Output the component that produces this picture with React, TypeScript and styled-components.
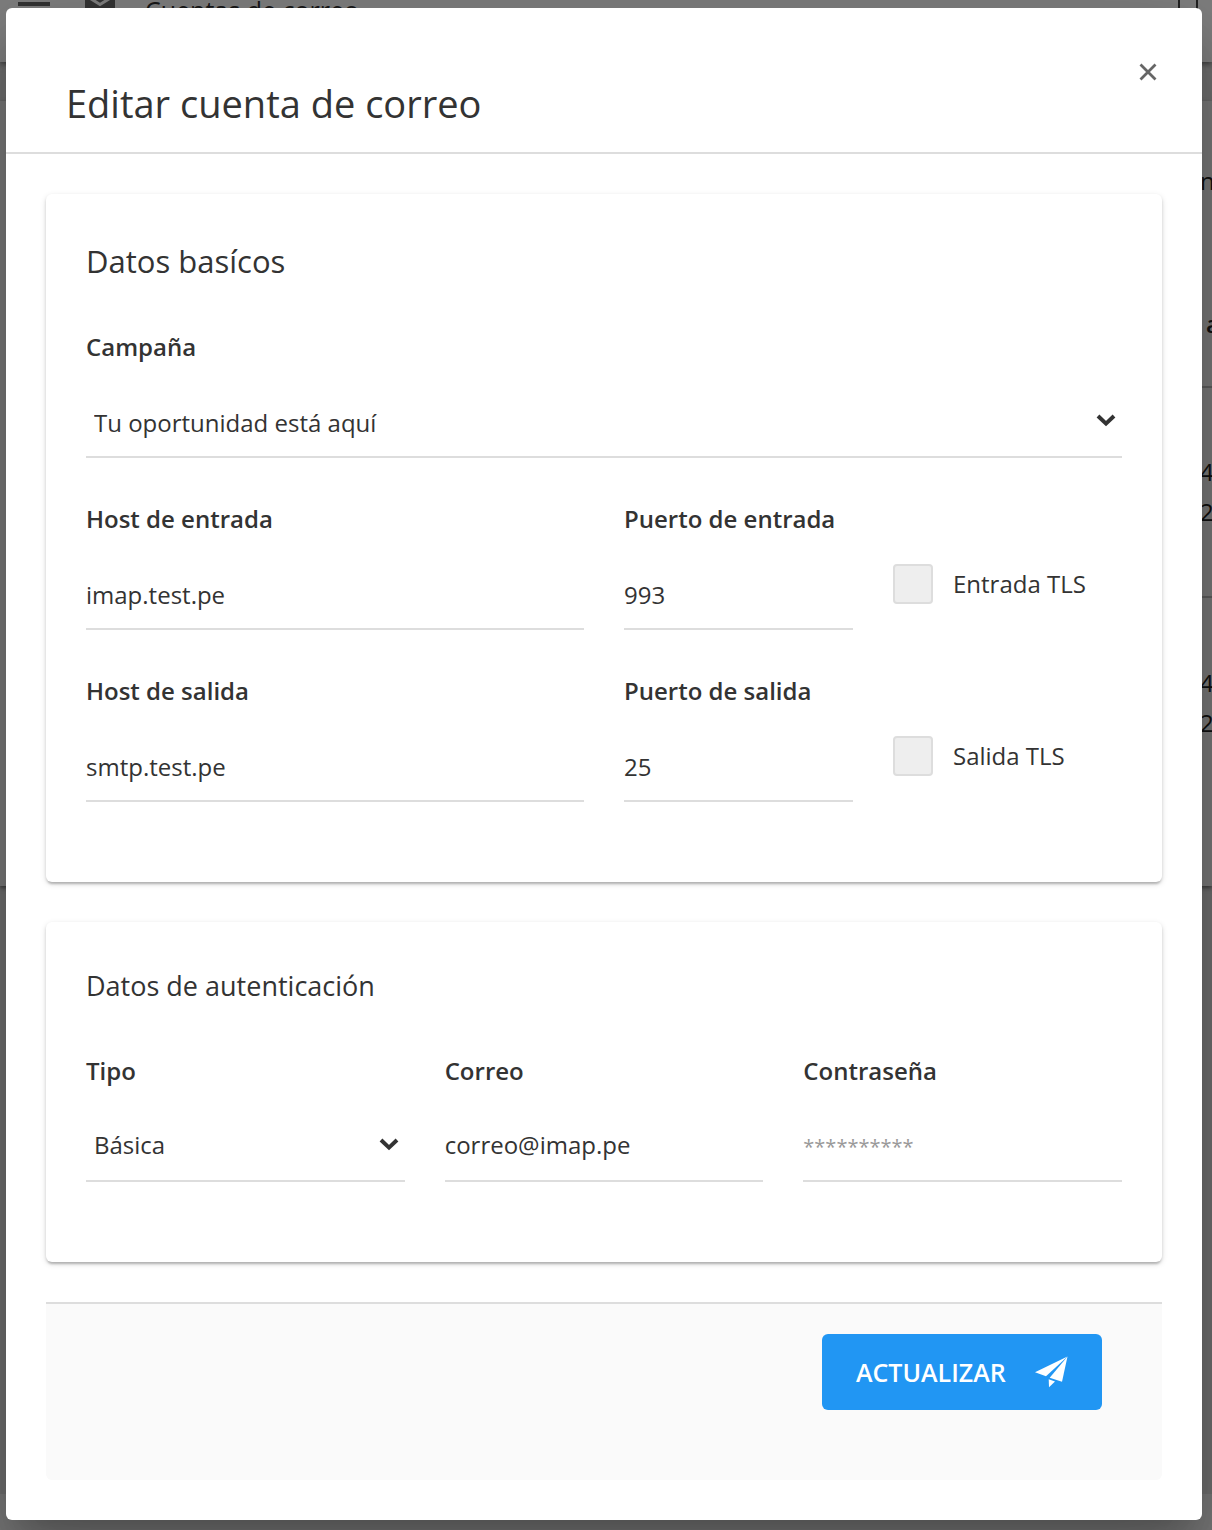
import React, { useState } from "react";
import styled, { createGlobalStyle } from "styled-components";

const ink = "#333333";
const line = "#dddddd";

const GlobalStyle = createGlobalStyle`
  *, *::before, *::after { box-sizing: border-box; }
  body {
    margin: 0;
    color: ${ink};
    font-family: "Segoe UI", "Open Sans", "Noto Sans", sans-serif;
    font-size: 24px;
    line-height: 36px;
  }
  h1, h2, p { margin: 0; font-weight: 400; }
`;

const Stage = styled.div`
  position: relative;
  min-height: 100vh;
`;

/* The page that stays behind the open dialog */
const Backdrop = styled.div`
  position: absolute;
  inset: 0;
  overflow: hidden;
  display: flex;
  flex-direction: column;
  background: #dedede;
`;

const TopBar = styled.header`
  flex: none;
  display: flex;
  align-items: flex-start;
  height: 62px;
  padding: 0 14px 0 18px;
  background: #ffffff;
  box-shadow: 0 2px 6px rgba(0, 0, 0, 0.5);
`;

const TopTitle = styled.p`
  margin-left: 30px;
  font-size: 25px;
  line-height: 20px;
`;

const MenuIcon = styled.svg`
  width: 32px;
  height: 26px;
  margin-top: 2px;
`;

const MailIcon = styled.svg`
  width: 30px;
  height: 24px;
  margin: -4px 0 0 35px;
`;

const Bracket = styled.span`
  width: 20px;
  height: 24px;
  margin-left: auto;
  border: solid #444444;
  border-width: 0 2px 2px;
`;

const ListPanel = styled.main`
  flex: none;
  display: flex;
  justify-content: flex-end;
  height: 785px;
  margin-top: 39px;
  background: #f3f3f3;
  box-shadow: 0 2px 4px rgba(0, 0, 0, 0.5);
`;

const ListEdge = styled.div`
  width: 12px;
  color: #222222;
  white-space: nowrap;
`;

const EdgeCell = styled.div<{ $height: number; $bold?: boolean; $ruled?: boolean }>`
  display: flex;
  flex-direction: column;
  justify-content: center;
  height: ${(p) => p.$height}px;
  padding-left: ${(p) => (p.$bold ? 6 : 0)}px;
  border-bottom: ${(p) => (p.$ruled ? 2 : 0)}px solid #bbbbbb;
  font-weight: ${(p) => (p.$bold ? 600 : 400)};
  line-height: 40px;
`;

const PageFooter = styled.div`
  flex: none;
  height: 36px;
  margin-top: auto;
  background: #f3f3f3;
`;

const Overlay = styled.div`
  position: relative;
  min-height: 100vh;
  padding: 8px 10px 10px 6px;
  background: rgba(0, 0, 0, 0.5);
`;

const Dialog = styled.section`
  border-radius: 6px;
  background: #ffffff;
  box-shadow:
    0 22px 30px -14px rgba(0, 0, 0, 0.2),
    0 48px 76px 6px rgba(0, 0, 0, 0.14),
    0 18px 92px 16px rgba(0, 0, 0, 0.12);
`;

const DialogHeader = styled.header`
  display: flex;
  align-items: flex-start;
  justify-content: space-between;
  padding: 44px 34px 14px 60px;
  border-bottom: 2px solid ${line};
`;

const Title = styled.h1`
  margin-top: 16px;
  font-size: 38px;
  line-height: 70px;
`;

const CloseButton = styled.button`
  display: grid;
  place-items: center;
  width: 40px;
  height: 40px;
  padding: 0;
  border: 0;
  background: none;
  color: #666666;
  cursor: pointer;
`;

const DialogBody = styled.form`
  display: flex;
  flex-direction: column;
  gap: 40px;
  padding: 40px;
`;

const Card = styled.section`
  padding: 40px 40px 80px;
  border-radius: 6px;
  box-shadow:
    0 4px 2px -2px rgba(0, 0, 0, 0.12),
    0 2px 3px rgba(0, 0, 0, 0.14),
    0 2px 6px rgba(0, 0, 0, 0.12);
`;

const CardTitle = styled.h2<{ $large?: boolean }>`
  margin-bottom: ${(p) => (p.$large ? 38 : 40)}px;
  font-size: ${(p) => (p.$large ? 31 : 27)}px;
  line-height: ${(p) => (p.$large ? 54 : 48)}px;
`;

const Grid = styled.div`
  display: grid;
  grid-template-columns: repeat(12, minmax(0, 1fr));
  gap: 40px;
`;

const Field = styled.div<{ $span: number }>`
  grid-column: span ${(p) => p.$span};
  display: flex;
  flex-direction: column;
  gap: 22px;
`;

const Label = styled.label`
  font-weight: 600;
  line-height: 42px;
`;

const TextInput = styled.input<{ $raised?: boolean }>`
  width: 100%;
  height: 68px;
  padding: 0 0 ${(p) => (p.$raised ? 6 : 2)}px;
  border: 0;
  border-bottom: 2px solid ${line};
  border-radius: 0;
  outline: 0;
  background: none;
  color: ${ink};
  font: inherit;
  &::placeholder { color: #999999; font-size: 20px; opacity: 1; }
`;

const SelectBox = styled.div`
  display: grid;
  align-items: center;
  & > * { grid-area: 1 / 1; }
`;

const NativeSelect = styled.select<{ $raised?: boolean }>`
  appearance: none;
  width: 100%;
  height: 68px;
  padding: 0 40px ${(p) => (p.$raised ? 4 : 0)}px 8px;
  border: 0;
  border-bottom: 2px solid ${line};
  border-radius: 0;
  outline: 0;
  background: none;
  color: ${ink};
  font: inherit;
`;

const Chevron = styled.svg`
  justify-self: end;
  width: 20px;
  height: 14px;
  margin: 0 6px 8px 0;
  pointer-events: none;
`;

const CheckLabel = styled.label`
  grid-column: span 3;
  align-self: end;
  display: flex;
  align-items: center;
  gap: 20px;
  margin-bottom: 26px;
  line-height: 40px;
  white-space: nowrap;
`;

const CheckBox = styled.input`
  appearance: none;
  flex: none;
  width: 40px;
  height: 40px;
  margin: 0;
  border: 2px solid ${line};
  border-radius: 4px;
  background: #eeeeee;
  &:checked { background: #2196f3; }
`;

const Actions = styled.footer`
  display: flex;
  justify-content: flex-end;
  padding: 30px 60px 70px;
  border-top: 2px solid ${line};
  border-radius: 0 0 6px 6px;
  background: #fafafa;
`;

const SubmitButton = styled.button`
  display: flex;
  align-items: center;
  justify-content: space-between;
  width: 280px;
  height: 76px;
  padding: 0 34px;
  border: 0;
  border-radius: 6px;
  background: #2196f3;
  color: #ffffff;
  font: inherit;
  font-size: 25px;
  font-weight: 600;
  cursor: pointer;
`;

function SelectField(props: {
  id: string;
  label: string;
  span: number;
  options: string[];
  raised?: boolean;
}) {
  return (
    <Field $span={props.span}>
      <Label htmlFor={props.id}>{props.label}</Label>
      <SelectBox>
        <NativeSelect id={props.id} $raised={props.raised}>
          {props.options.map((o) => (
            <option key={o}>{o}</option>
          ))}
        </NativeSelect>
        <Chevron viewBox="0 0 20 14" aria-hidden="true">
          <path d="M2 3 L10 10.6 L18 3" fill="none" stroke={ink} strokeWidth="4" />
        </Chevron>
      </SelectBox>
    </Field>
  );
}

function InputField(props: {
  id: string;
  label: string;
  span: number;
  value?: string;
  type?: string;
  placeholder?: string;
  raised?: boolean;
}) {
  const [value, setValue] = useState(props.value ?? "");
  return (
    <Field $span={props.span}>
      <Label htmlFor={props.id}>{props.label}</Label>
      <TextInput
        id={props.id}
        $raised={props.raised}
        type={props.type ?? "text"}
        placeholder={props.placeholder}
        value={value}
        onChange={(e) => setValue(e.target.value)}
      />
    </Field>
  );
}

function TlsField({ label }: { label: string }) {
  return (
    <CheckLabel>
      <CheckBox type="checkbox" />
      {label}
    </CheckLabel>
  );
}

export default function App() {
  return (
    <Stage>
      <GlobalStyle />
      <Backdrop aria-hidden="true">
        <TopBar>
          <MenuIcon viewBox="0 0 32 26">
            <path d="M0 2h32M0 13h32M0 24h32" stroke="#666666" strokeWidth="4" />
          </MenuIcon>
          <MailIcon viewBox="0 0 30 24">
            <path d="M0 0h30v24H0z" fill="#666666" />
            <path d="M3 1l12 7.500 12-7.500" fill="none" stroke="#ffffff" strokeWidth="3" />
          </MailIcon>
          <TopTitle>Cuentas de correo</TopTitle>
          <Bracket />
        </TopBar>
        <ListPanel>
          <ListEdge>
            <EdgeCell $height={160}>n</EdgeCell>
            <EdgeCell $height={127} $bold $ruled>a</EdgeCell>
            <EdgeCell $height={210} $ruled>
              <span>4</span>
              <span>2</span>
            </EdgeCell>
            <EdgeCell $height={210}>
              <span>4</span>
              <span>2</span>
            </EdgeCell>
          </ListEdge>
        </ListPanel>
        <PageFooter />
      </Backdrop>
      <Overlay>
        <Dialog role="dialog" aria-modal="true" aria-labelledby="dialog-title">
          <DialogHeader>
            <Title id="dialog-title">Editar cuenta de correo</Title>
            <CloseButton type="button" aria-label="Cerrar">
              <svg width="18" height="18" viewBox="0 0 18 18" aria-hidden="true">
                <path d="M1.500 1.500L16.500 16.500M16.500 1.500L1.500 16.500" stroke="currentColor" strokeWidth="2.800" />
              </svg>
            </CloseButton>
          </DialogHeader>
          <DialogBody onSubmit={(e) => e.preventDefault()}>
            <Card>
              <CardTitle $large>Datos basícos</CardTitle>
              <Grid>
                <SelectField id="campana" label="Campaña" span={12} options={["Tu oportunidad está aquí"]} />
                <InputField id="host-in" label="Host de entrada" span={6} value="imap.test.pe" />
                <InputField id="port-in" label="Puerto de entrada" span={3} value="993" />
                <TlsField label="Entrada TLS" />
                <InputField id="host-out" label="Host de salida" span={6} value="smtp.test.pe" />
                <InputField id="port-out" label="Puerto de salida" span={3} value="25" />
                <TlsField label="Salida TLS" />
              </Grid>
            </Card>
            <Card>
              <CardTitle>Datos de autenticación</CardTitle>
              <Grid>
                <SelectField id="tipo" label="Tipo" span={4} options={["Básica"]} raised />
                <InputField id="correo" label="Correo" span={4} value="correo@imap.pe" raised />
                <InputField
                  id="clave"
                  label="Contraseña"
                  span={4}
                  type="password"
                  placeholder="**********"
                  raised
                />
              </Grid>
            </Card>
            <Actions>
              <SubmitButton type="submit">
                ACTUALIZAR
                <svg width="33" height="32" viewBox="0 0 33 32" aria-hidden="true">
                  <path d="M32.500 0.500L0 16.200L11 20.200Z" fill="#ffffff" />
                  <path d="M32.500 0.500L27 25.800L14.700 21.800Z" fill="#ffffff" />
                  <path d="M13.700 23.200L20 25.500L14 31.200Z" fill="#ffffff" />
                </svg>
              </SubmitButton>
            </Actions>
          </DialogBody>
        </Dialog>
      </Overlay>
    </Stage>
  );
}
